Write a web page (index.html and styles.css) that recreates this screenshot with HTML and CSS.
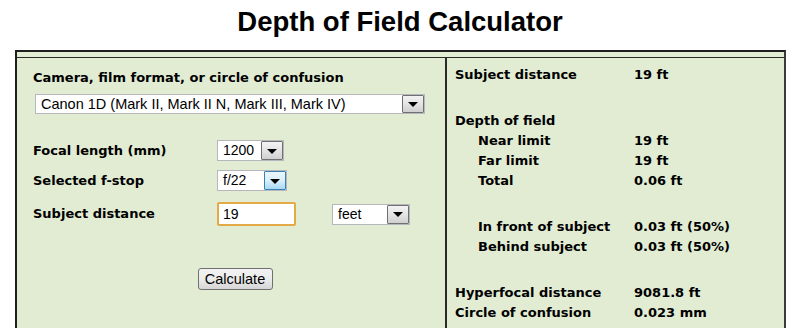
FILE: index.html
```html
<!DOCTYPE html>
<html lang="en">
<head>
  <meta charset="UTF-8">
  <title>Depth of Field Calculator</title>
  <link rel="stylesheet" href="styles.css">
</head>
<body>
  <h1 class="title">Depth of Field Calculator</h1>

  <div class="calc">
    <div class="calc-strip"></div>
    <div class="calc-body">

      <div class="inputs">
        <div class="label">Camera, film format, or circle of confusion</div>
        <div class="dd dd-camera">
          <span class="dd-val">Canon 1D (Mark II, Mark II N, Mark III, Mark IV)</span>
          <span class="dd-btn"></span>
        </div>

        <div class="row row-focal">
          <span class="label row-label">Focal length (mm)</span>
          <div class="dd dd-focal">
            <span class="dd-val">1200</span>
            <span class="dd-btn"></span>
          </div>
        </div>

        <div class="row row-fstop">
          <span class="label row-label">Selected f-stop</span>
          <div class="dd dd-fstop">
            <span class="dd-val">f/22</span>
            <span class="dd-btn hot"></span>
          </div>
        </div>

        <div class="row row-dist">
          <span class="label row-label">Subject distance</span>
          <div class="text-in">19</div>
          <div class="dd dd-units">
            <span class="dd-val">feet</span>
            <span class="dd-btn"></span>
          </div>
        </div>

        <div class="actions">
          <button class="btn">Calculate</button>
        </div>
      </div>

      <div class="results">
        <div class="res-group">
          <span>Subject distance</span><span>19 ft</span>
        </div>
        <div class="res-group">
          <span>Depth of field</span><span></span>
          <span class="sub">Near limit</span><span>19 ft</span>
          <span class="sub">Far limit</span><span>19 ft</span>
          <span class="sub">Total</span><span>0.06 ft</span>
        </div>
        <div class="res-group">
          <span class="sub">In front of subject</span><span>0.03 ft (50%)</span>
          <span class="sub">Behind subject</span><span>0.03 ft (50%)</span>
        </div>
        <div class="res-group">
          <span>Hyperfocal distance</span><span>9081.8 ft</span>
          <span>Circle of confusion</span><span>0.023 mm</span>
        </div>
      </div>

    </div>
  </div>
</body>
</html>
```

FILE: styles.css
```css
body {
  margin: 0;
  background: #fff;
  color: #000;
  font-family: "Liberation Sans", Arial, sans-serif;
}

.title {
  margin: 7px 0 0;
  height: 43px;
  font-size: 27.5px;
  line-height: 30px;
  font-weight: bold;
  text-align: center;
}

.calc {
  margin: 0 14px 0 15px;
  border: 2px solid #1e1e1e;
  border-right-color: #3a3a3a;
  border-bottom: none;
  background: #e1ecd3;
  height: 276px;
  overflow: hidden;
}

.calc-strip {
  height: 5px;
  border-bottom: 1px solid #2a2a2a;
}

.calc-body {
  display: grid;
  grid-template-columns: 430px 1fr;
  height: 100%;
}

.label {
  font-family: "DejaVu Sans", Verdana, sans-serif;
  font-weight: bold;
  font-size: 13px;
  line-height: 16px;
  color: #000;
}

/* left column */
.inputs {
  padding: 12px 8px 0 16px;
  border-right: 2px solid #2a2a2a;
}

.dd {
  display: flex;
  box-sizing: border-box;
  height: 21px;
  background: #fff;
  border: 1px solid #b4b8bc;
  font-size: 14px;
}

.dd-val {
  flex: 1;
  padding: 0 5px;
  line-height: 19px;
  white-space: nowrap;
  overflow: hidden;
}

.dd-btn {
  width: 22px;
  box-sizing: border-box;
  border: 1px solid #707070;
  border-radius: 1px;
  background: linear-gradient(#f3f3f3, #e4e4e4 50%, #cfcfcf);
  display: flex;
  align-items: center;
  justify-content: center;
}

.dd-btn::after {
  content: "";
  border-left: 5px solid transparent;
  border-right: 5px solid transparent;
  border-top: 5px solid #000;
  margin-top: 1px;
}

.dd-btn.hot {
  border-color: #3c7fb1;
  background: linear-gradient(#eaf6fd, #d9f0fc 50%, #a7d9f5);
}

.dd-camera {
  width: 390px;
  height: 20px;
  margin: 8px 0 0 2px;
  font-size: 14.5px;
}

.dd-camera .dd-val {
  line-height: 18px;
}

.row {
  display: flex;
  align-items: center;
}

.row-label {
  width: 184px;
}

.row-focal {
  margin-top: 26px;
}

.row-fstop {
  margin-top: 9px;
}

.row-dist {
  margin-top: 11px;
}

.dd-focal {
  width: 67px;
}

.dd-fstop {
  width: 70px;
}

.text-in {
  box-sizing: border-box;
  width: 79px;
  height: 24px;
  border: 2px solid #e3aa47;
  border-radius: 2px;
  background: #fff;
  padding-left: 4px;
  font-size: 14px;
  line-height: 20px;
}

.dd-units {
  width: 78px;
  margin-left: 36px;
}

.actions {
  margin-top: 42px;
  text-align: center;
}

.btn {
  box-sizing: border-box;
  width: 75px;
  height: 22px;
  padding: 0;
  border: 1px solid #707070;
  border-radius: 3px;
  background: linear-gradient(#f2f2f2, #ebebeb 50%, #d6d6d6);
  font-family: "Liberation Sans", Arial, sans-serif;
  font-size: 14.5px;
  color: #000;
}

/* right column */
.results {
  padding: 7px 0 0 8px;
}

.res-group {
  display: grid;
  grid-template-columns: 179px auto;
  font-family: "DejaVu Sans", Verdana, sans-serif;
  font-weight: bold;
  font-size: 13px;
  line-height: 20px;
}

.res-group + .res-group {
  margin-top: 26px;
}

.res-group .sub {
  padding-left: 23px;
}
```
